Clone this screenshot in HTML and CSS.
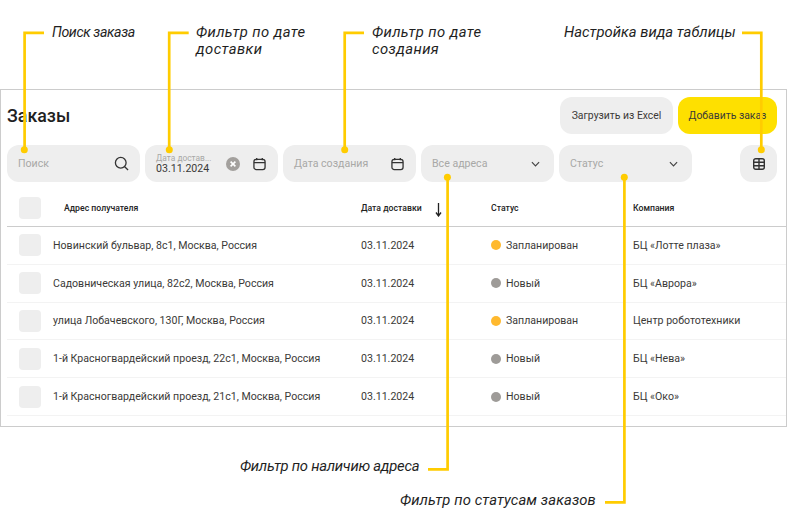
FILE: index.html
```html
<!DOCTYPE html>
<html lang="ru">
<head>
<meta charset="UTF-8">
<meta name="viewport" content="width=device-width, initial-scale=1.0">
<title>Заказы</title>
<link rel="stylesheet" href="styles.css">
</head>
<body>
<div class="page">
  <div class="frame">
    <div class="head">
      <h1 class="title">Заказы</h1>
      <div class="actions">
        <button type="button" class="btn btn-excel">Загрузить из Excel</button>
        <button type="button" class="btn btn-add">Добавить заказ</button>
      </div>
    </div>

    <div class="filters">
      <div class="field">
        <span class="placeholder">Поиск</span>
        <svg class="icon" viewBox="0 0 16 16"><circle cx="7.2" cy="7.2" r="5.7"/><path d="M11.4 11.4 15 15"/></svg>
      </div>
      <div class="field">
        <div class="stacked">
          <span class="small-label">Дата достав...</span>
          <span class="value">03.11.2024</span>
        </div>
        <svg class="clear" viewBox="0 0 14 14"><circle cx="7" cy="7" r="7"/><path d="M4.6 4.6l4.8 4.8M9.4 4.6 4.6 9.4"/></svg>
        <svg class="icon icon-cal" viewBox="0 0 14 14"><rect x="1" y="2" width="12" height="11" rx="2.5"/><path d="M1 5.5h12M4 .5v2.5M10 .5v2.5"/></svg>
      </div>
      <div class="field">
        <span class="placeholder">Дата создания</span>
        <svg class="icon icon-cal" viewBox="0 0 14 14"><rect x="1" y="2" width="12" height="11" rx="2.5"/><path d="M1 5.5h12M4 .5v2.5M10 .5v2.5"/></svg>
      </div>
      <div class="field">
        <span class="placeholder">Все адреса</span>
        <svg class="chevron" viewBox="0 0 10 6"><path d="M1 1l4 4 4-4"/></svg>
      </div>
      <div class="field">
        <span class="placeholder">Статус</span>
        <svg class="chevron" viewBox="0 0 10 6"><path d="M1 1l4 4 4-4"/></svg>
      </div>
      <button type="button" class="view-btn">
        <svg class="icon icon-grid" viewBox="0 0 12 12"><rect x=".7" y=".7" width="10.6" height="10.6" rx="2"/><path d="M.7 4.2h10.6M.7 7.8h10.6M6 .7v10.6"/></svg>
      </button>
    </div>

    <div class="row row-head">
      <span class="check"></span>
      <span class="col-addr">Адрес получателя</span>
      <span class="col-date">Дата доставки
        <svg class="sort" viewBox="0 0 7 14"><path d="M3.5 0v12M1 9.5l2.5 3.5 2.5-3.5"/></svg>
      </span>
      <span>Статус</span>
      <span>Компания</span>
    </div>

    <div class="row">
      <span class="check"></span>
      <span>Новинский бульвар, 8с1, Москва, Россия</span>
      <span>03.11.2024</span>
      <span class="status"><i class="dot dot-plan"></i>Запланирован</span>
      <span>БЦ «Лотте плаза»</span>
    </div>
    <div class="row">
      <span class="check"></span>
      <span>Садовническая улица, 82с2, Москва, Россия</span>
      <span>03.11.2024</span>
      <span class="status"><i class="dot dot-new"></i>Новый</span>
      <span>БЦ «Аврора»</span>
    </div>
    <div class="row">
      <span class="check"></span>
      <span>улица Лобачевского, 130Г, Москва, Россия</span>
      <span>03.11.2024</span>
      <span class="status"><i class="dot dot-plan"></i>Запланирован</span>
      <span>Центр робототехники</span>
    </div>
    <div class="row">
      <span class="check"></span>
      <span>1-й Красногвардейский проезд, 22с1, Москва, Россия</span>
      <span>03.11.2024</span>
      <span class="status"><i class="dot dot-new"></i>Новый</span>
      <span>БЦ «Нева»</span>
    </div>
    <div class="row">
      <span class="check"></span>
      <span>1-й Красногвардейский проезд, 21с1, Москва, Россия</span>
      <span>03.11.2024</span>
      <span class="status"><i class="dot dot-new"></i>Новый</span>
      <span>БЦ «Око»</span>
    </div>
  </div>

  <!-- подписи и выноски поверх макета -->
  <svg class="leaders" viewBox="0 0 787 515">
    <path d="M44 32.8H24.6V150"/>
    <path d="M188.7 32.8H169.2V150"/>
    <path d="M364 32.8H344.7V150"/>
    <path d="M742 32.8H761.3V150"/>
    <path d="M447.6 177V469.3H428"/>
    <path d="M624.4 177V502.3H605"/>
    <circle cx="24.3" cy="149.7" r="3.5"/>
    <circle cx="169.3" cy="149.7" r="3.5"/>
    <circle cx="344.7" cy="149.7" r="3.5"/>
    <circle cx="761.3" cy="149.7" r="3.5"/>
    <circle cx="447.4" cy="177.3" r="3.5"/>
    <circle cx="624.3" cy="177.3" r="3.5"/>
  </svg>
  <div class="note note-search">Поиск заказа</div>
  <div class="note note-delivery">Фильтр по дате<br>доставки</div>
  <div class="note note-created">Фильтр по дате<br>создания</div>
  <div class="note note-view">Настройка вида таблицы</div>
  <div class="note note-address">Фильтр по наличию адреса</div>
  <div class="note note-state">Фильтр по статусам заказов</div>
</div>
</body>
</html>
```

FILE: styles.css
```css
* {
  box-sizing: border-box;
}

body {
  margin: 0;
  background-color: #fff;
  font-family: Roboto, Arial, sans-serif;
  color: #3b3a38;
}

.page {
  position: relative;
  width: 787px;
  height: 515px;
  overflow: hidden;
  padding-top: 89px;
}

.frame {
  height: 338px;
  border: 1px solid #cccccc;
  padding: 7px 0 0 6px;
}

.head {
  display: flex;
  justify-content: space-between;
  align-items: center;
  padding-right: 9px;
}

.title {
  margin: 0;
  font-size: 17.8px;
  font-weight: 500;
  color: #1f1f1f;
}

.actions {
  display: flex;
  gap: 5px;
}

.btn {
  height: 37px;
  border: none;
  border-radius: 12px;
  font-family: inherit;
  font-size: 10.4px;
  color: #3b3a38;
}

.btn-excel {
  width: 113px;
  background-color: #eeeeee;
}

.btn-add {
  width: 99px;
  background-color: #fee000;
}

.filters {
  display: flex;
  gap: 5px;
  margin-top: 11px;
  padding-right: 9px;
}

.field {
  display: flex;
  align-items: center;
  width: 133px;
  height: 37px;
  padding: 0 11px;
  border-radius: 12px;
  background-color: #eeeeee;
}

.placeholder {
  flex: 1;
  font-size: 10.6px;
  color: #a8a8a6;
}

.stacked {
  display: flex;
  flex: 1;
  flex-direction: column;
}

.small-label {
  font-size: 8.4px;
  line-height: 10px;
  color: #a8a8a6;
}

.value {
  font-size: 10.6px;
  line-height: 11px;
}

.icon {
  width: 15px;
  height: 15px;
  fill: none;
  stroke: #333;
  stroke-width: 1.4;
}

.icon-cal {
  width: 13px;
  height: 14px;
  margin-right: 1px;
}

.icon-grid {
  width: 12px;
  height: 12px;
}

.clear {
  width: 14px;
  height: 14px;
  margin-right: 13px;
  fill: #a3a09d;
  stroke: #fff;
  stroke-width: 1.6;
}

.clear circle {
  stroke: none;
}

.chevron {
  width: 9px;
  height: 6px;
  margin-right: 3px;
  fill: none;
  stroke: #444;
  stroke-width: 1.3;
}

.view-btn {
  display: flex;
  align-items: center;
  justify-content: center;
  width: 37px;
  height: 37px;
  margin-left: auto;
  border: none;
  border-radius: 12px;
  background-color: #eeeeee;
}

.row {
  display: grid;
  grid-template-columns: 46px 308px 130px 142px 1fr;
  align-items: center;
  height: 37.8px;
  border-bottom: 1px solid #f3f3f3;
  font-size: 10.6px;
}

.row-head {
  height: 45px;
  padding-top: 8px;
  border-bottom: 1px solid #cccccc;
  font-size: 8.7px;
  font-weight: 500;
  color: #222;
}

.check {
  width: 22px;
  height: 22px;
  margin-left: 12px;
  border-radius: 4px;
  background-color: #eeeeee;
}

.col-addr {
  padding-left: 11px;
}

.col-date {
  position: relative;
}

.sort {
  position: absolute;
  left: 74px;
  top: 0;
  width: 7px;
  height: 14px;
  fill: none;
  stroke: #222;
  stroke-width: 1.3;
}

.status {
  display: flex;
  align-items: center;
}

.dot {
  width: 10px;
  height: 10px;
  margin-right: 5px;
  border-radius: 50%;
}

.dot-plan {
  background-color: #ffb92e;
}

.dot-new {
  background-color: #9e9b98;
}

.leaders {
  position: absolute;
  left: 0;
  top: 0;
  width: 787px;
  height: 515px;
  fill: #ffcc00;
}

.leaders path {
  fill: none;
  stroke: #ffcc00;
  stroke-width: 2.7;
}

.note {
  position: absolute;
  font-size: 14.8px;
  font-style: italic;
  line-height: 17px;
  color: #1f1f1f;
}

.note-search {
  left: 52px;
  top: 24px;
  font-size: 14.2px;
  letter-spacing: -0.4px;
}

.note-delivery {
  left: 196px;
  top: 24px;
  letter-spacing: 0.4px;
}

.note-created {
  left: 372px;
  top: 24px;
  letter-spacing: 0.4px;
}

.note-view {
  left: 564px;
  top: 24px;
}

.note-address {
  left: 240px;
  top: 458px;
  letter-spacing: -0.25px;
}

.note-state {
  left: 400px;
  top: 492px;
  letter-spacing: 0.1px;
}
```
